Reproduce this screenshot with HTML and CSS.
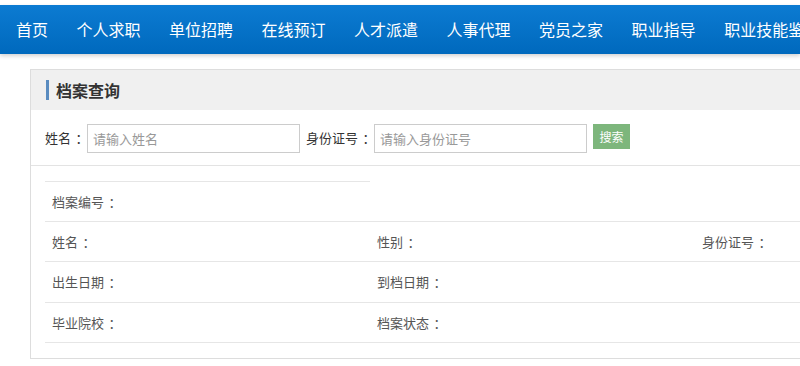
FILE: index.html
```html
<!DOCTYPE html>
<html lang="zh-CN">
<head>
<meta charset="utf-8">
<title>档案查询</title>
<link rel="stylesheet" href="styles.css">
</head>
<body>
<nav class="nav">
  <a class="nav-item">首页</a>
  <a class="nav-item">个人求职</a>
  <a class="nav-item">单位招聘</a>
  <a class="nav-item">在线预订</a>
  <a class="nav-item">人才派遣</a>
  <a class="nav-item">人事代理</a>
  <a class="nav-item">党员之家</a>
  <a class="nav-item">职业指导</a>
  <a class="nav-item">职业技能鉴定</a>
</nav>
<main class="content">
  <section class="panel">
    <div class="panel-head"><h2 class="panel-title">档案查询</h2></div>
    <form class="search">
      <label class="search-label">姓名<span class="colon">：</span></label>
      <input class="search-input" type="text" placeholder="请输入姓名">
      <label class="search-label">身份证号<span class="colon">：</span></label>
      <input class="search-input" type="text" placeholder="请输入身份证号">
      <button class="search-btn" type="button">搜索</button>
    </form>
    <div class="result">
      <div class="row row-first">
        <div class="cell cell-top">档案编号<span class="colon">：</span></div>
      </div>
      <div class="row">
        <div class="cell">姓名<span class="colon">：</span></div>
        <div class="cell">性别<span class="colon">：</span></div>
        <div class="cell">身份证号<span class="colon">：</span></div>
      </div>
      <div class="row">
        <div class="cell">出生日期<span class="colon">：</span></div>
        <div class="cell">到档日期<span class="colon">：</span></div>
        <div class="cell"></div>
      </div>
      <div class="row">
        <div class="cell">毕业院校<span class="colon">：</span></div>
        <div class="cell">档案状态<span class="colon">：</span></div>
        <div class="cell"></div>
      </div>
    </div>
  </section>
</main>
</body>
</html>
```
FILE: styles.css
```css
html, body {
  margin: 0;
  padding: 0;
  background: #fff;
  overflow: hidden;
  font-family: "Noto Sans CJK SC", "Microsoft YaHei", sans-serif;
  color: #333;
}

.colon {
  display: inline-block;
  padding-left: 0.35em;
  margin-right: -0.35em;
}

.nav {
  margin-top: 5px;
  height: 49px;
  display: flex;
  align-items: center;
  white-space: nowrap;
  padding-left: 1.75px;
  background: linear-gradient(#0c7bd2, #0069bd);
  box-shadow: 0 2px 4px rgba(0, 0, 0, 0.18);
}

.nav-item {
  flex: none;
  color: #fff;
  font-size: 16px;
  padding: 0 14.25px;
  line-height: 49px;
}

.content {
  padding: 15px 0 0 30px;
}

.panel {
  width: 1000px;
  border: 1px solid #dddddd;
  height: 288px;
}

.panel-head {
  height: 40px;
  background: #f0f0f0;
  display: flex;
  align-items: center;
  padding-left: 15px;
}

.panel-title {
  margin: 0;
  font-size: 16px;
  font-weight: bold;
  color: #333;
  line-height: 20px;
  border-left: 3px solid #5a8cc0;
  padding-left: 7px;
}

.search {
  height: 55px;
  display: flex;
  align-items: center;
  padding-left: 14px;
  border-bottom: 1px solid #e3e3e3;
}

.search-label {
  font-size: 13px;
  color: #333;
  margin-right: 3px;
}

.search-input {
  box-sizing: border-box;
  width: 213px;
  height: 29px;
  border: 1px solid #cccccc;
  padding: 0 5px;
  font-size: 13px;
  font-family: inherit;
  margin: 1px 6px 0 0;
  outline: none;
}

.search-input::placeholder {
  color: #999;
}

.search-btn {
  width: 37px;
  height: 25px;
  border: none;
  background: #7db67c;
  color: #fff;
  font-size: 12px;
  font-family: inherit;
  padding: 0;
  margin-top: -3px;
}

.result {
  padding: 15px 14px 0 14px;
}

.row {
  display: grid;
  grid-template-columns: 325px 325px 325px;
  height: 40.3px;
  border-bottom: 1px solid #e6e6e6;
  box-sizing: border-box;
}

.row-first {
  height: 41px;
}

.cell {
  font-size: 13px;
  color: #555;
  padding-left: 7px;
  line-height: 39px;
}

.cell-top {
  border-top: 1px solid #e6e6e6;
  line-height: 39px;
}
```
